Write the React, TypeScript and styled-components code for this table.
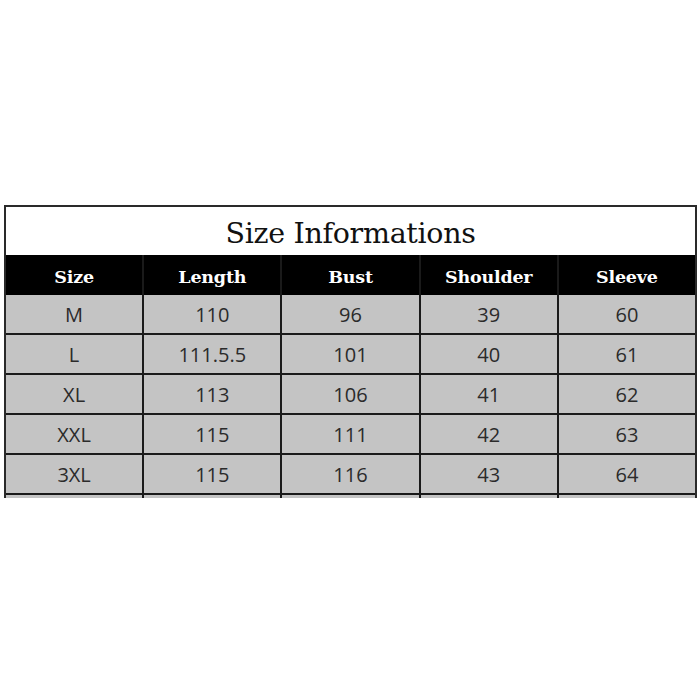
import * as React from 'react';
import styled, { createGlobalStyle } from 'styled-components';

const GlobalStyle = createGlobalStyle`
  html, body {
    margin: 0;
    padding: 0;
    background: #ffffff;
  }
`;

const Page = styled.div`
  width: 700px;
  height: 700px;
  padding-top: 205px;
  padding-left: 4px;
  box-sizing: border-box;
  background: #fff;
`;

const Table = styled.div`
  width: 693px;
  border: 2px solid #2a2a2a;
  border-bottom: none;
  box-sizing: border-box;
`;

const Title = styled.div`
  height: 48px;
  padding-top: 5px;
  box-sizing: border-box;
  display: flex;
  align-items: center;
  justify-content: center;
  font-family: 'DejaVu Serif', 'Liberation Serif', serif;
  font-size: 28.5px;
  color: #111;
  background: #fff;
  letter-spacing: -0.3px;
`;

const Grid = styled.div`
  display: grid;
  grid-template-columns: repeat(5, 1fr);
  column-gap: 2px;
  row-gap: 2px;
  background: #1a1a1a;
`;

const HeadCell = styled.div`
  height: 40px;
  margin-bottom: -2px;
  padding-top: 3px;
  box-sizing: border-box;
  display: flex;
  align-items: center;
  justify-content: center;
  background: #000;
  color: #fff;
  font-family: 'DejaVu Serif', 'Liberation Serif', serif;
  font-weight: 700;
  font-size: 17.5px;
  letter-spacing: -0.2px;
`;

const Cell = styled.div`
  height: 38px;
  display: flex;
  align-items: center;
  justify-content: center;
  background: #c4c4c4;
  color: #2b2b2b;
  font-family: 'Open Sans', 'Liberation Sans', sans-serif;
  font-size: 20px;
`;

const Stub = styled.div`
  height: 3px;
  background: #c4c4c4;
`;

const headers = ['Size', 'Length', 'Bust', 'Shoulder', 'Sleeve'];

const rows = [
  ['M', '110', '96', '39', '60'],
  ['L', '111.5.5', '101', '40', '61'],
  ['XL', '113', '106', '41', '62'],
  ['XXL', '115', '111', '42', '63'],
  ['3XL', '115', '116', '43', '64'],
];

export default function App() {
  return (
    <Page>
      <GlobalStyle />
      <Table>
        <Title>Size Informations</Title>
        <Grid>
          {headers.map((h) => (
            <HeadCell key={h}>{h}</HeadCell>
          ))}
          {rows.map((r, i) =>
            r.map((v, j) => <Cell key={`${i}-${j}`}>{v}</Cell>)
          )}
          {headers.map((h) => (
            <Stub key={`stub-${h}`} />
          ))}
        </Grid>
      </Table>
    </Page>
  );
}
